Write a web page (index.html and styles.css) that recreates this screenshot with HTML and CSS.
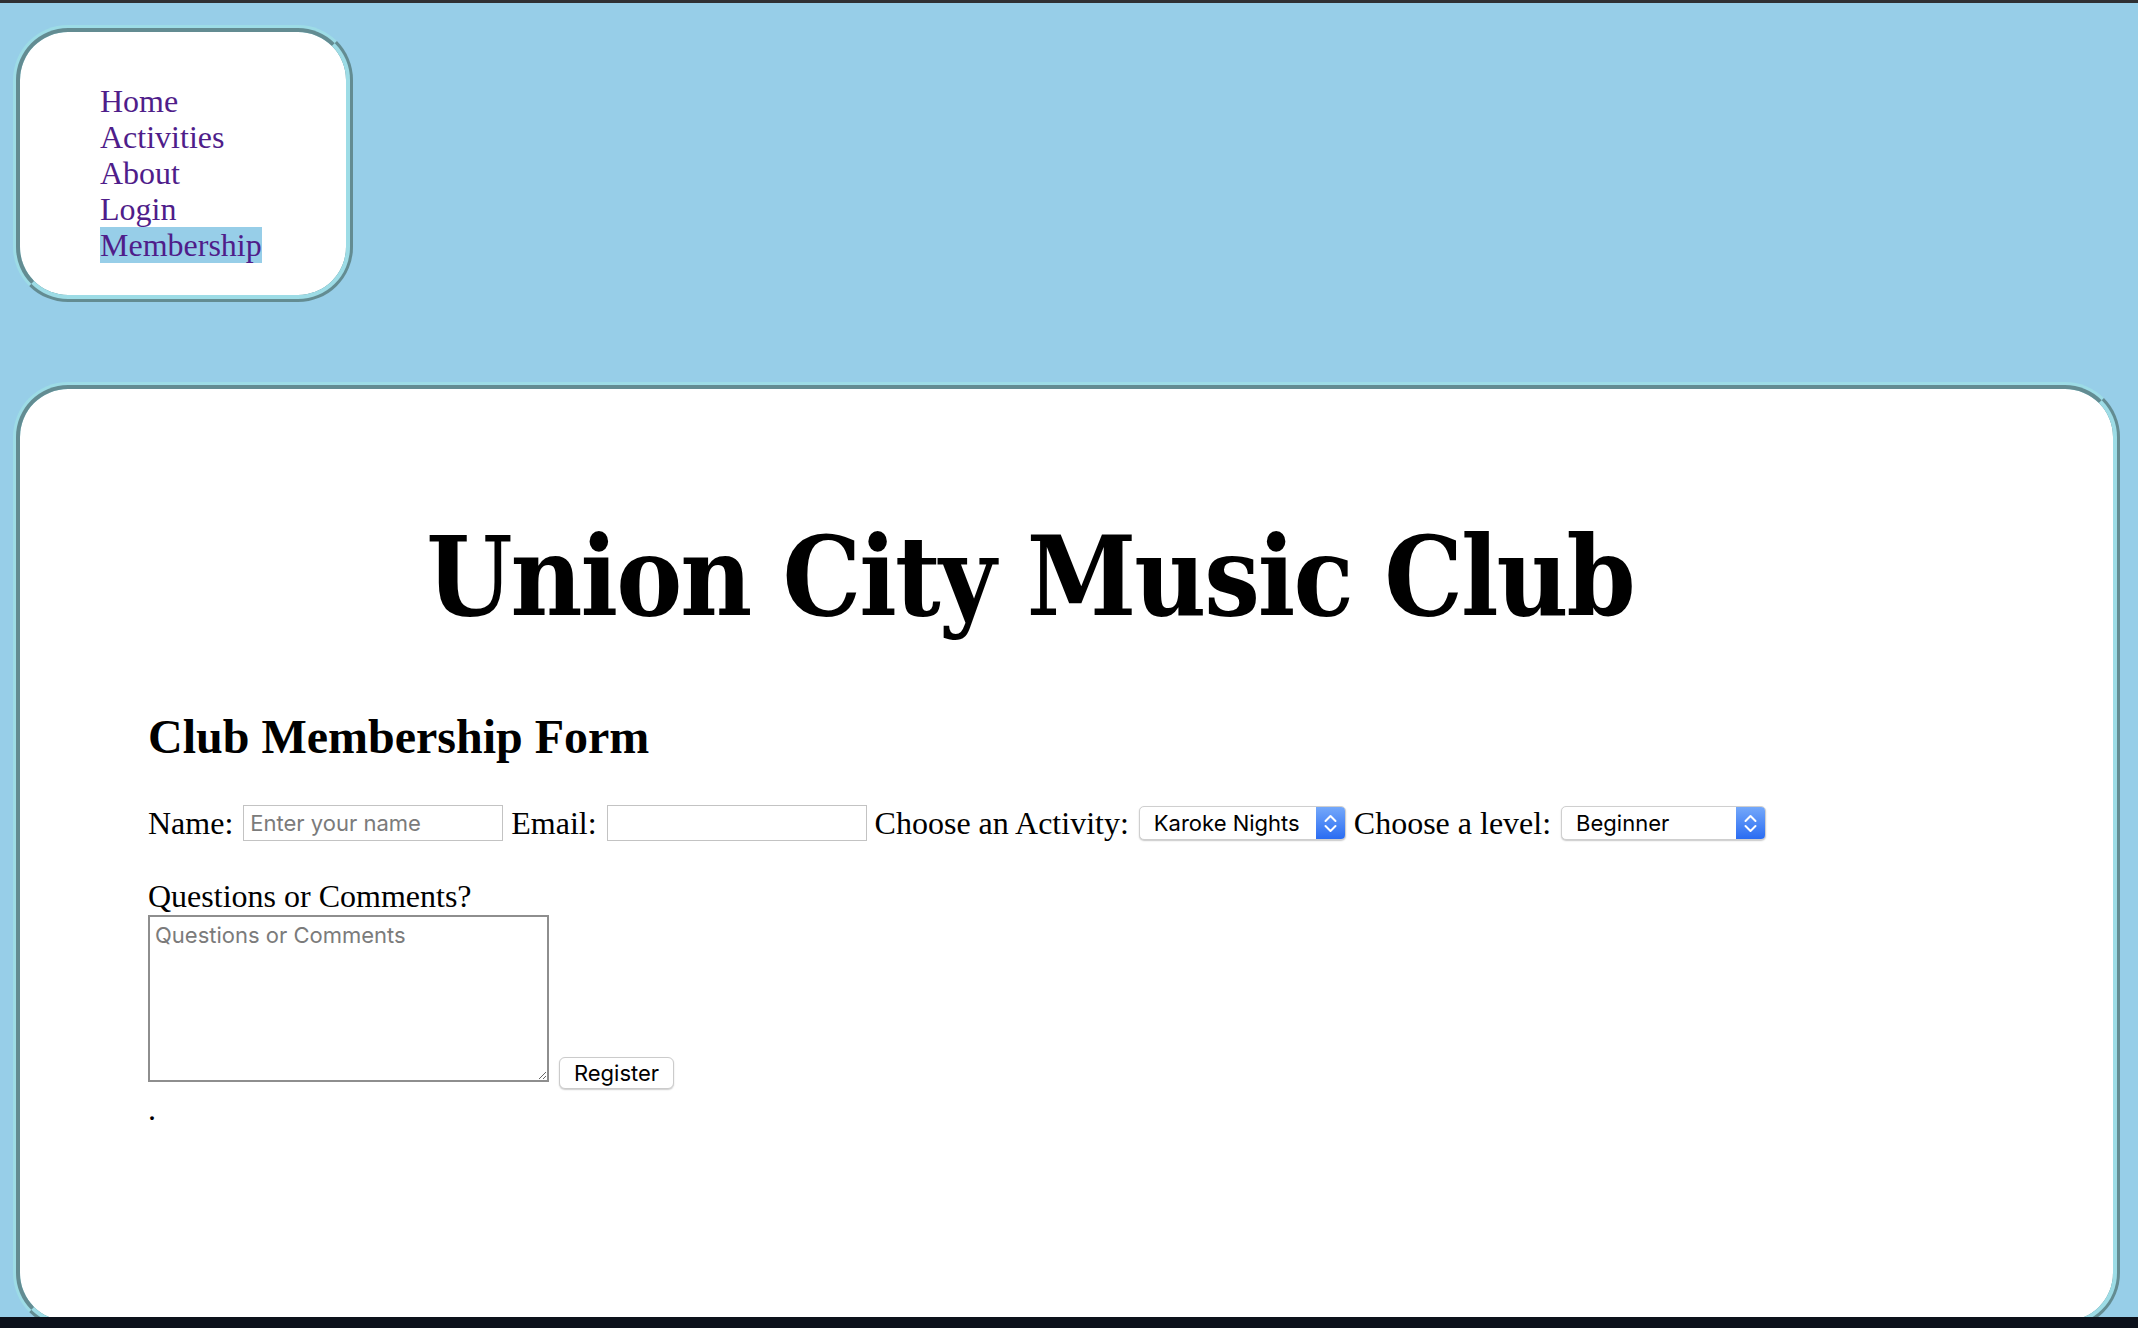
FILE: index.html
```html
<!DOCTYPE html>
<html lang="en">
<head>
<meta charset="utf-8">
<title>Union City Music Club - Membership</title>
<link rel="stylesheet" href="styles.css">
</head>
<body>
<div class="page">
  <nav class="nav">
    <ul class="nav-list">
      <li><a href="#">Home</a></li>
      <li><a href="#">Activities</a></li>
      <li><a href="#">About</a></li>
      <li><a href="#">Login</a></li>
      <li><a href="#" class="active">Membership</a></li>
    </ul>
  </nav>
  <main class="main">
    <h1 class="title">Union City Music Club</h1>
    <h2 class="form-title">Club Membership Form</h2>
    <form class="form">
      <div class="row">
        <label class="lbl" for="name">Name:</label>
        <input class="txt" id="name" type="text" placeholder="Enter your name">
        <label class="lbl" for="email">Email:</label>
        <input class="txt" id="email" type="email">
        <label class="lbl" for="activity">Choose an Activity:</label>
        <span class="sel sel-activity">
          <select id="activity"><option>Karoke Nights</option></select>
          <span class="sel-arrow"><svg width="29" height="32" viewBox="0 0 29 32"><polyline points="9.5,14 14.5,9 19.5,14" /><polyline points="9.5,19 14.5,24 19.5,19" /></svg></span>
        </span>
        <label class="lbl" for="level">Choose a level:</label>
        <span class="sel sel-level">
          <select id="level"><option>Beginner</option></select>
          <span class="sel-arrow"><svg width="29" height="32" viewBox="0 0 29 32"><polyline points="9.5,14 14.5,9 19.5,14" /><polyline points="9.5,19 14.5,24 19.5,19" /></svg></span>
        </span>
      </div>
      <label class="q-label" for="comments">Questions or Comments?</label>
      <div class="q-row">
        <textarea id="comments" class="area" placeholder="Questions or Comments"></textarea>
        <button type="button" class="btn">Register</button>
      </div>
      <p class="dot">.</p>
    </form>
  </main>
</div>
</body>
</html>
```
FILE: styles.css
```css
html, body {
  margin: 0;
  padding: 0;
}
body {
  background: #97cee8;
  font-family: "Liberation Serif", "Times New Roman", serif;
  font-size: 32px;
  color: #000;
  overflow: hidden;
}
body::before {
  content: "";
  position: fixed;
  left: 0;
  top: 0;
  right: 0;
  height: 3px;
  background: #2f3033;
}
body::after {
  content: "";
  position: fixed;
  left: 0;
  bottom: 0;
  right: 0;
  height: 11px;
  background: #0c111b;
}
.page {
  padding: 25px 18px 0 13px;
}
.nav {
  box-sizing: border-box;
  width: 340px;
  height: 277px;
  margin-bottom: 80px;
  padding: 51px 0 0 80px;
  background: #fff;
  border: 7px ridge #9ddce6;
  border-radius: 55px;
}
.nav-list {
  list-style: none;
  margin: 0;
  padding: 0;
}
.nav-list li {
  line-height: 36px;
}
.nav-list a {
  color: #4f1d8a;
  text-decoration: none;
}
.nav-list a.active {
  background: #97cee8;
}
.main {
  box-sizing: border-box;
  height: 946px;
  padding: 133px 128px 0 128px;
  background: #fff;
  border: 7px ridge #9ddce6;
  border-radius: 55px;
}
.title {
  margin: 0 0 77px 0;
  padding-right: 73px;
  text-align: center;
  font-family: "DejaVu Serif Condensed", "DejaVu Serif", serif;
  font-stretch: condensed;
  font-weight: bold;
  font-size: 110px;
  line-height: 110px;
  letter-spacing: -2px;
}
.form-title {
  margin: 0 0 40px 0;
  font-size: 48px;
  line-height: 56px;
  font-weight: bold;
}
.form {
  margin: 0;
}
.row {
  display: flex;
  align-items: center;
  height: 36px;
  margin-bottom: 37px;
}
.lbl {
  margin-right: 10px;
  white-space: nowrap;
}
.txt {
  box-sizing: border-box;
  width: 260px;
  height: 36px;
  margin: 0 8px 0 0;
  padding: 0 6px;
  border: 1px solid #c3c3c3;
  border-radius: 0;
  font-family: "Inter", "Liberation Sans", sans-serif;
  font-size: 22px;
  color: #000;
  background: #fff;
  outline: none;
}
.txt::placeholder {
  color: #7b7b7b;
}
.sel {
  box-sizing: border-box;
  display: inline-flex;
  height: 34px;
  margin-right: 8px;
  border: 1px solid #cfcfcf;
  border-radius: 5px;
  background: #fff;
  box-shadow: 0 1px 1.5px rgba(0, 0, 0, 0.22);
  overflow: hidden;
}
.sel-activity {
  width: 207px;
}
.sel-level {
  width: 205px;
}
.sel select {
  flex: 1;
  min-width: 0;
  -webkit-appearance: none;
  appearance: none;
  border: none;
  background: transparent;
  padding: 0 0 0 14px;
  margin: 0;
  font-family: "Inter", "Liberation Sans", sans-serif;
  font-size: 22px;
  color: #000;
  outline: none;
}
.sel-arrow {
  display: flex;
  align-items: center;
  justify-content: center;
  width: 29px;
  background: linear-gradient(#74a8fa, #2a6cf2);
}
.sel-arrow svg polyline {
  fill: none;
  stroke: #fff;
  stroke-width: 2;
  stroke-linecap: round;
  stroke-linejoin: round;
}
.q-label {
  display: block;
  line-height: normal;
}
.q-row {
  display: flex;
  align-items: flex-end;
}
.area {
  box-sizing: border-box;
  width: 401px;
  height: 167px;
  margin: 0 10px 7px 0;
  padding: 5px 5px;
  border: 2px solid #8e8e8e;
  font-family: "Inter", "Liberation Sans", sans-serif;
  font-size: 22px;
  resize: both;
  outline: none;
}
.area::placeholder {
  color: #7b7b7b;
}
.btn {
  box-sizing: border-box;
  width: 115px;
  height: 32px;
  margin: 0;
  padding: 0;
  border: 1px solid #cbcbcb;
  border-radius: 6px;
  background: #fff;
  box-shadow: 0 1px 1.5px rgba(0, 0, 0, 0.2);
  font-family: "Inter", "Liberation Sans", sans-serif;
  font-size: 22px;
  color: #000;
}
.dot {
  margin: 2px 0 0 0;
  line-height: normal;
}
```
